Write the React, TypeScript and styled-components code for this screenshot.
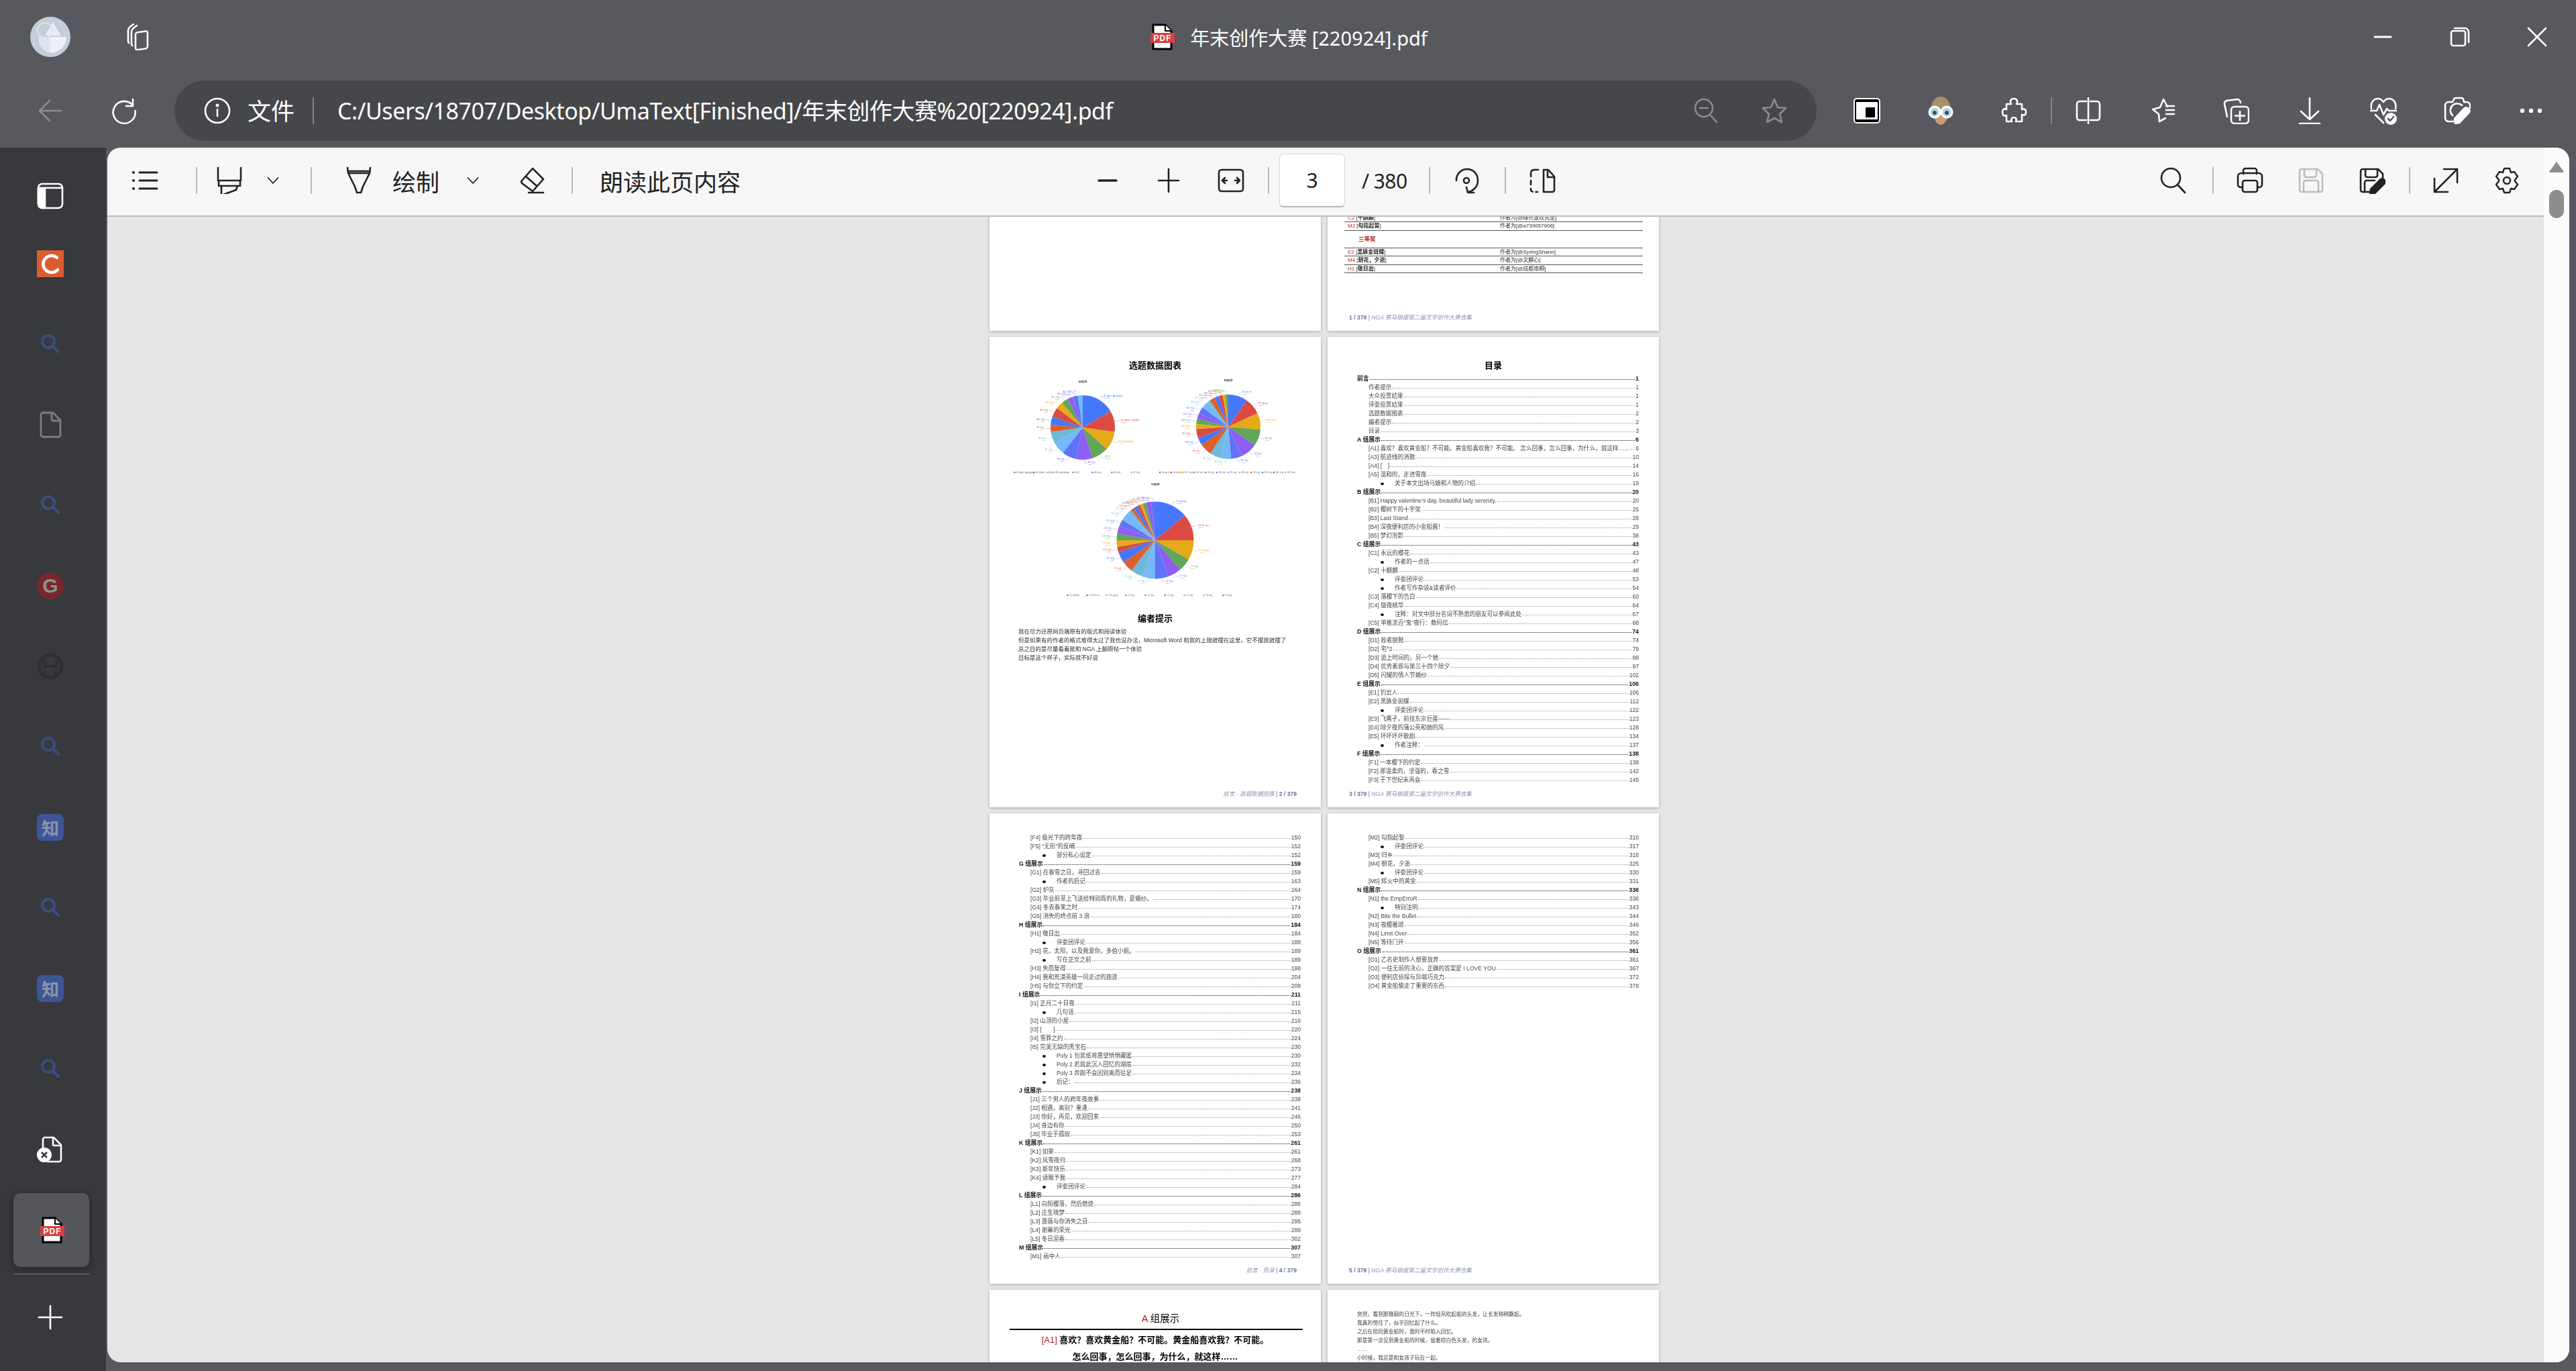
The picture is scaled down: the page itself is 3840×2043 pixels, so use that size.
import React from 'react';
import styled, { createGlobalStyle } from 'styled-components';

const UI_FONT = '"Noto Sans", "Noto Sans CJK SC", sans-serif';
const DOC_FONT = '"Liberation Sans", "Noto Sans CJK SC", sans-serif';

const Global = createGlobalStyle`
  html, body { margin: 0; padding: 0; background: #58595e; overflow: hidden; }
  #root { width: 3840px; height: 2043px; }
`;

const Shell = styled.div`
  width: 3840px;
  height: 2043px;
  display: flex;
  flex-direction: column;
  background: #58595e;
  font-family: ${UI_FONT};
  color: #fff;
  overflow: hidden;
`;

/* ---- browser chrome ---- */
const TitleBar = styled.div`
  height: 120px;
  flex: none;
  display: grid;
  grid-template-columns: 1fr auto 1fr;
  align-items: center;
  padding-bottom: 10px;
  box-sizing: border-box;
`;
const TitleLeft = styled.div`
  display: flex;
  align-items: center;
  padding-left: 45px;
  gap: 80px;
`;
const TitleCenter = styled.div`
  display: flex;
  align-items: center;
  gap: 22px;
  font-size: 29px;
`;
const WindowButtons = styled.div`
  display: flex;
  justify-content: flex-end;
  align-items: center;
  padding-right: 38px;
  gap: 75px;
`;
const AddressRow = styled.div`
  height: 100px;
  flex: none;
  display: flex;
  align-items: flex-start;
`;
const RowButton = styled.div<{ $w?: number }>`
  width: ${(p) => p.$w ?? 110}px;
  height: 90px;
  flex: none;
  display: flex;
  align-items: center;
  justify-content: center;
`;
const NavGroup = styled.div`
  display: flex;
  padding-left: 20px;
  width: 260px;
  box-sizing: border-box;
`;
const UrlPill = styled.div`
  width: 2448px;
  height: 90px;
  flex: none;
  border-radius: 45px;
  background: #46474b;
  display: flex;
  align-items: center;
  box-sizing: border-box;
  padding-left: 44px;
`;
const UrlLabel = styled.span`
  font-size: 35px;
  margin-left: 25px;
  line-height: 1;
`;
const UrlDivider = styled.i`
  width: 2px;
  height: 40px;
  background: #85868a;
  margin: 0 35px 0 27px;
`;
const UrlText = styled.span`
  font-size: 34px;
  line-height: 1;
  white-space: nowrap;
  width: 1155px;
  flex: none;
  letter-spacing: -0.45px;
`;
const PillEnd = styled.div`
  margin-left: auto;
  display: flex;
  align-items: center;
  gap: 62px;
  padding-right: 43px;
`;
const ChromeTools = styled.div`
  display: flex;
  margin-left: 20px;
`;
const ChromeDivider = styled.i`
  width: 2px;
  height: 40px;
  margin: 25px -1px 0;
  background: #85868a;
`;

/* ---- sidebar ---- */
const Body = styled.div`
  flex: 1;
  display: flex;
  min-height: 0;
`;
const Sidebar = styled.div`
  width: 160px;
  flex: none;
  background: #38393d;
  border-right: 2px solid #58595e;
  display: flex;
  flex-direction: column;
  padding: 52px 8px 0 0;
  box-sizing: border-box;
`;
const SideTop = styled.div`
  height: 40px;
  margin-bottom: 21px;
  display: flex;
  justify-content: center;
`;
const SideItem = styled.div`
  height: 120px;
  flex: none;
  display: flex;
  align-items: center;
  justify-content: center;
`;
const SideActive = styled.div`
  width: 113px;
  height: 110px;
  margin-left: 3px;
  border-radius: 10px;
  background: #55565b;
  box-shadow: 0 2px 12px rgba(0, 0, 0, 0.35);
  display: flex;
  align-items: center;
  justify-content: center;
`;
const SideRule = styled.div`
  width: 113px;
  margin: 5px 0 4px 20px;
  border-top: 1px solid #7c7d80;
`;
const SideTile = styled.div<{ $bg: string; $round?: string }>`
  width: 40px;
  height: 40px;
  background: ${(p) => p.$bg};
  border-radius: ${(p) => p.$round ?? '0'};
  display: flex;
  align-items: center;
  justify-content: center;
  overflow: hidden;
`;
const ZhihuMark = styled.span`
  font-family: "Noto Sans CJK SC", sans-serif;
  font-size: 26px;
  line-height: 1;
  font-weight: 700;
  color: #8d94a8;
`;
const GMark = styled.span`
  font-family: "Liberation Sans", sans-serif;
  font-size: 30px;
  line-height: 1;
  font-weight: 700;
  color: #8f8f92;
`;

/* ---- pdf panel ---- */
const Panel = styled.div`
  width: 3670px;
  height: 1810px;
  flex: none;
  display: flex;
  border-radius: 20px;
  overflow: hidden;
  background: #e6e6e6;
`;
const PanelMain = styled.div`
  flex: 1;
  min-width: 0;
  display: flex;
  flex-direction: column;
`;
const Toolbar = styled.div`
  height: 103px;
  flex: none;
  box-sizing: border-box;
  border-bottom: 2px solid #bdbdbd;
  background: #f7f7f7;
  color: #222;
  display: flex;
  align-items: center;
  padding: 0 0 3px 36px;
`;
const ToolIcon = styled.div<{ $ml?: number; $w?: number }>`
  width: ${(p) => p.$w ?? 40}px;
  height: 44px;
  flex: none;
  margin-left: ${(p) => p.$ml ?? 0}px;
  display: flex;
  align-items: center;
  justify-content: center;
`;
const ToolDivider = styled.i<{ $ml: number }>`
  width: 2px;
  height: 40px;
  flex: none;
  background: #b9b9b9;
  margin-left: ${(p) => p.$ml}px;
`;
const ToolText = styled.span<{ $ml: number }>`
  font-family: "Noto Sans CJK SC", sans-serif;
  font-size: 35px;
  line-height: 1;
  flex: none;
  white-space: nowrap;
  margin-left: ${(p) => p.$ml}px;
`;
const PageBox = styled.div`
  width: 98px;
  height: 80px;
  margin-left: 15px;
  flex: none;
  box-sizing: border-box;
  background: #fff;
  border: 1px solid #d6d6d6;
  border-bottom: 2px solid #b5b5b5;
  border-radius: 6px;
  display: flex;
  align-items: center;
  justify-content: center;
  font-size: 30px;
`;
const PageCount = styled.span`
  margin-left: 25px;
  width: 70px;
  flex: none;
  font-size: 30px;
  white-space: nowrap;
  letter-spacing: -0.6px;
`;
const ScrollRail = styled.div`
  width: 38px;
  flex: none;
  background: #fcfcfc;
  display: flex;
  flex-direction: column;
  align-items: center;
  padding-top: 20px;
`;
const ScrollArrow = styled.svg`
  width: 24px;
  height: 18px;
  display: block;
`;
const ScrollThumb = styled.div`
  width: 22px;
  height: 42px;
  margin-top: 25px;
  border-radius: 11px;
  background: #8d8d8d;
`;
const Viewer = styled.div`
  flex: 1;
  min-height: 0;
  overflow: hidden;
  padding-right: 4px;
`;
const Pages = styled.div`
  display: grid;
  grid-template-columns: 494px 494px;
  justify-content: center;
  gap: 9px 10px;
  margin-top: -531px;
`;
const Page = styled.div<{ $end?: boolean }>`
  height: 701px;
  background: #fff;
  box-shadow: 0 1px 4px rgba(0, 0, 0, 0.28);
  display: flex;
  flex-direction: column;
  justify-content: ${(p) => (p.$end ? 'flex-end' : 'flex-start')};
  font-family: ${DOC_FONT};
  color: #2c2c2c;
  overflow: hidden;
  filter: blur(0.3px);
`;
const PageFill = styled.div`
  flex: 1;
`;
const Footer = styled.div<{ $right?: boolean }>`
  height: 12px;
  line-height: 12px;
  flex: none;
  margin-bottom: 14px;
  padding: ${(p) => (p.$right ? '0 36px 0 0' : '0 0 0 32px')};
  text-align: ${(p) => (p.$right ? 'right' : 'left')};
  font-size: 8.6px;
  color: #5f6fa0;
  white-space: nowrap;
`;
const FooterItalic = styled.em`
  color: #8a94b4;
`;
const FooterNum = styled.b`
  font-weight: 700;
`;
const AwardTable = styled.div`
  margin: 0 24px 60px 25px;
`;
const AwardRow = styled.div`
  height: 12.5px;
  line-height: 12px;
  box-sizing: border-box;
  border-bottom: 1px solid #555;
  display: grid;
  grid-template-columns: 227px 1fr;
  font-size: 8px;
  padding-left: 5px;
  white-space: nowrap;
`;
const AwardHead = styled.div`
  height: 25px;
  line-height: 24px;
  font-size: 8.5px;
  font-weight: 700;
  color: #b01818;
  padding-left: 21px;
  border-bottom: 1px solid #555;
`;
const AwardCode = styled.span`
  color: #c02020;
`;
const AwardName = styled.b`
  font-weight: 700;
  color: #222;
`;
const DocTitle = styled.h2`
  margin: 35px 0 0;
  text-align: center;
  font-size: 13px;
  line-height: 16px;
  font-weight: 700;
  color: #000;
  flex: none;
`;
const ChartRow = styled.div`
  display: flex;
  justify-content: center;
  gap: 7px;
  margin-top: 7px;
`;
const ChartWrap = styled.div`
  display: flex;
  justify-content: center;
  margin-top: 5px;
`;
const ChartSvg = styled.svg`
  display: block;
  flex: none;
`;
const NoteTitle = styled(DocTitle)`
  margin-top: 19px;
`;
const Note = styled.div`
  margin: 5px 0 0 43px;
  font-size: 8.5px;
  line-height: 13px;
  white-space: nowrap;
`;
const TocList = styled.div<{ $mt: number }>`
  margin: ${(p) => p.$mt}px 30px 0 44px;
`;
const TocRow = styled.div<{ $level: number }>`
  height: 13px;
  line-height: 13px;
  display: flex;
  align-items: baseline;
  white-space: nowrap;
  font-size: ${(p) => (p.$level === 0 ? 8.8 : 8.6)}px;
  font-weight: ${(p) => (p.$level === 0 ? 700 : 400)};
  color: ${(p) => (p.$level === 0 ? '#111' : '#454545')};
  padding-left: ${(p) => (p.$level === 1 ? 17 : 0)}px;
`;
const TocBullet = styled.i`
  width: 5px;
  height: 4px;
  flex: none;
  border-radius: 50%;
  background: #111;
  margin: 0 16.5px 1px 34.5px;
`;
const TocLeader = styled.span<{ $level: number }>`
  flex: 1;
  min-width: 0;
  margin: 0 1px;
  border-bottom: 1px dotted ${(p) => (p.$level === 0 ? '#222' : '#999')};
  transform: translateY(-1px);
`;
const GroupTitle = styled.div`
  margin-top: 34px;
  text-align: center;
  font-size: 14.5px;
  line-height: 18px;
  color: #000;
  padding-left: 16px;
`;
const GroupLetter = styled.span`
  color: #b01818;
`;
const GroupRule = styled.div`
  margin: 6px 27px 0 30px;
  border-top: 2px solid #000;
`;
const StoryTitle = styled.div<{ $mt: number }>`
  margin-top: ${(p) => p.$mt}px;
  text-align: center;
  font-size: 13px;
  line-height: 16px;
  font-weight: 700;
  color: #000;
  white-space: nowrap;
`;
const StoryCode = styled.span`
  color: #b01818;
  font-weight: 400;
`;
const Prose = styled.div`
  padding: 30px 0 0 44px;
  font-size: 7.8px;
  line-height: 13px;
  color: #3c3c3c;
  white-space: nowrap;
`;

/* ---- icons ---- */
const Ic = ({
  c = 'currentColor',
  s = 40,
  w = 2.6,
  children,
}: {
  c?: string;
  s?: number;
  w?: number;
  children: React.ReactNode;
}) => (
  <svg width={s} height={s} viewBox="0 0 40 40" fill="none" stroke={c} strokeWidth={w} strokeLinecap="round" strokeLinejoin="round">
    {children}
  </svg>
);

const SearchBlue = () => (
  <Ic c="#35507f" w={4}>
    <circle cx="17" cy="16" r="9" />
    <path d="M24 23l8 8" />
  </Ic>
);

const PdfFile = ({ s = 40 }: { s?: number }) => (
  <svg width={s} height={s} viewBox="0 0 40 40">
    <path d="M7 2h18l9 9v27H7z" fill="#fff" stroke="#000" strokeWidth="3" />
    <path d="M25 2v9h9" fill="#fff" stroke="#000" strokeWidth="2" />
    <rect x="3" y="14" width="36" height="15" fill="#d94040" />
    <text x="21" y="26" textAnchor="middle" fontFamily="Liberation Sans, sans-serif" fontSize="12" fontWeight="700" fill="#fff" letterSpacing="1">
      PDF
    </text>
  </svg>
);

/* ---- pie charts ---- */
const PALETTE = ['#4477fc', '#db4b43', '#e6a917', '#61a659', '#8c5ff0', '#5f72f8', '#76b8fa', '#6fbadc', '#dc602f'];

type Slice = [number, string];

const pt = (cx: number, cy: number, r: number, deg: number): [number, number] => {
  const a = ((deg - 90) * Math.PI) / 180;
  return [cx + r * Math.cos(a), cy + r * Math.sin(a)];
};

const Pie = ({
  title,
  width,
  height,
  cy,
  r,
  titleY,
  legendY,
  legendCount,
  slices,
}: {
  title: string;
  width: number;
  height: number;
  cy: number;
  r: number;
  titleY: number;
  legendY: number;
  legendCount: number;
  slices: Slice[];
}) => {
  const cx = width / 2;
  let prev = 0;
  const legendStep = Math.min(29, (width - 6) / legendCount);
  const legendX = cx - (legendStep * legendCount) / 2;
  return (
    <ChartSvg width={width} height={height} viewBox={`0 0 ${width} ${height}`} fontFamily={DOC_FONT}>
      <text x={cx} y={titleY} textAnchor="middle" fontSize="3.4" fontWeight="700" fill="#333">
        {title}
      </text>
      {slices.map(([end, label], i) => {
        const start = prev;
        prev = end;
        const color = PALETTE[i % PALETTE.length];
        const [x1, y1] = pt(cx, cy, r, start);
        const [x2, y2] = pt(cx, cy, r, end);
        const large = end - start > 180 ? 1 : 0;
        const mid = (start + end) / 2;
        const [lx0, ly0] = pt(cx, cy, r, mid);
        const [lx1, ly1] = pt(cx, cy, r + 5, mid);
        const right = mid < 180;
        const lx2 = lx1 + (right ? 4 : -4);
        return (
          <g key={i}>
            <path d={`M${cx} ${cy}L${x1} ${y1}A${r} ${r} 0 ${large} 1 ${x2} ${y2}Z`} fill={color} />
            <path d={`M${lx0} ${ly0}L${lx1} ${ly1}L${lx2} ${ly1}`} stroke={color} strokeWidth="0.3" fill="none" />
            <text x={lx2 + (right ? 1 : -1)} y={ly1} textAnchor={right ? 'start' : 'end'} fontSize="2.8" fill={color}>
              {label}
            </text>
            <text x={lx2 + (right ? 1 : -1)} y={ly1 + 3} textAnchor={right ? 'start' : 'end'} fontSize="2.4" fill={color}>
              {(((end - start) / 360) * 100).toFixed(2)}%
            </text>
          </g>
        );
      })}
      {slices.slice(0, legendCount).map(([, label], i) => (
        <g key={i}>
          <circle cx={legendX + i * legendStep} cy={legendY} r="1.3" fill={PALETTE[i % PALETTE.length]} />
          <text x={legendX + i * legendStep + 3} y={legendY + 1} fontSize="2.6" fill="#666">
            {label}
          </text>
        </g>
      ))}
    </ChartSvg>
  );
};

const named = (ends: number[], labels: string[], prefix: string): Slice[] =>
  ends.map((end, i) => [end, labels[i] ?? `${prefix}${i + 1}: 作品`]);

const PIE_A = named(
  [60, 98, 132, 162, 192, 218, 241, 262, 275, 290, 307, 320, 332, 342, 351, 360],
  ['A1: 喜欢？喜欢黄金船', 'A5: 温和的，走进雪夜', 'A3: 航迹线的消散', 'A4: [ ]'],
  'A'
);
const PIE_B = named(
  [35, 65, 95, 125, 155, 175, 194, 214, 236, 250, 266, 275, 285, 295, 307, 320, 325, 335, 343, 350, 355, 360],
  ['B1: 情人节', 'B4: 便利店', 'B2: 十字架'],
  'B'
);
const PIE_C = named(
  [50, 90, 120, 140, 160, 180, 199, 218, 235, 252, 260, 270, 280, 292, 302, 315, 321, 326, 332, 337, 341, 346, 354, 360],
  ['C5: 百鬼夜行', 'C19: 那个女人', 'C15: 黄金船'],
  'C'
);

/* ---- table of contents data: level | text | page ---- */
const toc = (src: string) =>
  src
    .trim()
    .split('\n')
    .map((line) => {
      const [lv, text, page] = line.trim().split('|');
      return { level: Number(lv), text, page };
    });

const TOC_3 = toc(`
0|前言|1
1|作者提示|1
1|大众投票结果|1
1|评委投票结果|1
1|选题数据图表|2
1|编者提示|2
1|目录|3
0|A 组展示|6
1|[A1] 喜欢？喜欢黄金船？不可能。黄金船喜欢我？不可能。 怎么回事，怎么回事，为什么，就这样……|6
1|[A3] 航迹线的消散|10
1|[A4] [　]|14
1|[A5] 温和的，走进雪夜|16
2|关于本文出场马娘和人物的介绍|19
0|B 组展示|20
1|[B1] Happy valentine's day, beautiful lady serenity.|20
1|[B2] 樱树下的十字架|25
1|[B3] Last Stand|28
1|[B4] 深夜便利店的小金船酱！|29
1|[B5] 梦幻泡影|38
0|C 组展示|43
1|[C1] 永远的樱花|43
2|作者的一点话|47
1|[C2] 十麒麟|48
2|评委团评论|53
2|作者写作杂谈&读者评价|54
1|[C3] 落樱下的告白|60
1|[C4] 胧夜桃华|64
2|注释：对文中部分名词不熟悉的朋友可以参阅此处|67
1|[C5] 单推流百"鬼"夜行：数码伝|68
0|D 组展示|74
1|[D1] 败者脱靴|74
1|[D2] 宅^2|79
1|[D3] 追上时间的，另一个她|88
1|[D4] 优秀素质与第三十四个除夕|97
1|[D5] 闪耀的情人节婚纱|102
0|E 组展示|106
1|[E1] 钓云人|106
1|[E2] 黑脉金斑蝶|112
2|评委团评论|122
1|[E3] 飞鹰子，前往东京巨蛋——|123
1|[E4] 除夕夜的蒲公英和她的风|128
1|[E5] 坏坏坏坏歌剧|134
2|作者注释：|137
0|F 组展示|138
1|[F1] 一本樱下的约定|138
1|[F2] 那温柔的，坚强的，春之雪|142
1|[F3] 于下世纪末再会|145
`);

const TOC_4 = toc(`
1|[F4] 极光下的跨年夜|150
1|[F5] "无形"的反晡|152
2|部分私心设定|152
0|G 组展示|159
1|[G1] 在春雪之日，寻回过去|159
2|作者的后记|163
1|[G2] 炉灰|164
1|[G3] 毕业前草上飞送给特别周的礼物，是婚纱。|170
1|[G4] 冬去春来之时|174
1|[G5] 消失的终点前 3 浪|180
0|H 组展示|184
1|[H1] 敬日出|184
2|评委团评论|188
1|[H2] 花，太阳，以及我爱你，多伯小姐。|189
2|写在正文之前|189
1|[H3] 失而复得|198
1|[H4] 我和荒漠英雄一同走过的旅途|204
1|[H5] 与你立下的约定|208
0|I 组展示|211
1|[I1] 正月二十日夜|211
2|几句话|215
1|[I2] 山顶的小屋|216
1|[I3] [　　]|220
1|[I4] 雪葬之约|224
1|[I5] 完美无缺的黑宝石|230
2|Poly 1 包装纸将愿望悄悄藏匿|230
2|Poly 2 若就此沉入回忆的湖底|232
2|Poly 3 奔跑不会因别离而驻足|234
2|后记：|236
0|J 组展示|238
1|[J1] 三个男人的跨年夜故事|238
1|[J2] 相遇，离别？重逢|241
1|[J3] 你好，再见，欢迎回来|246
1|[J4] 身边有你|250
1|[J5] 毕业于孤寂|253
0|K 组展示|261
1|[K1] 如果|261
1|[K2] 风雪夜归|268
1|[K3] 新年快乐|273
1|[K4] 请赐予我|277
2|评委团评论|284
0|L 组展示|286
1|[L1] 向阳樱落，然后燃烧|286
1|[L2] 庄生晓梦|288
1|[L3] 蔷薇与你消失之日|295
1|[L4] 谢幕的荣光|299
1|[L5] 冬日迎春|302
0|M 组展示|307
1|[M1] 画中人|307
`);

const TOC_5 = toc(`
1|[M2] 勾指起誓|310
2|评委团评论|317
1|[M3] 归乡|318
1|[M4] 朝花，夕逝|325
2|评委团评论|330
1|[M5] 辉火中的黄金|331
0|N 组展示|336
1|[N1] the EmpErroR|336
2|特别注明|343
1|[N2] Bite the Bullet|344
1|[N3] 夜樱雅颂|346
1|[N4] Limit Over|352
1|[N5] 等待门开|356
0|O 组展示|361
1|[O1] 乙名史制作人想要放弃|361
1|[O2] 一往无前的决心，正确的答案是 I LOVE YOU|367
1|[O3] 便利店侦探与异端巧克力|372
1|[O4] 黄金船偷走了重要的东西|378
`);

const Toc = ({ rows, mt }: { rows: ReturnType<typeof toc>; mt: number }) => (
  <TocList $mt={mt}>
    {rows.map((r, i) => (
      <TocRow key={i} $level={r.level}>
        {r.level === 2 && <TocBullet />}
        <span>{r.text}</span>
        <TocLeader $level={r.level} />
        <span>{r.page}</span>
      </TocRow>
    ))}
  </TocList>
);

const BookFooter = ({ n }: { n: number }) => (
  <Footer>
    <FooterNum>{n} / 379</FooterNum> | <FooterItalic>NGA 赛马娘版第二届文学创作大赛合集</FooterItalic>
  </Footer>
);

const ChapterFooter = ({ label, n }: { label: string; n: number }) => (
  <Footer $right>
    <FooterItalic>{label}</FooterItalic> | <FooterNum>{n} / 379</FooterNum>
  </Footer>
);

const Award = ({ code, name, author }: { code: string; name: string; author: string }) => (
  <AwardRow>
    <span>
      <AwardCode>{code}</AwardCode> [<AwardName>{name}</AwardName>]
    </span>
    <span>作者为[{author}]</span>
  </AwardRow>
);

export default function App() {
  return (
    <Shell>
      <Global />
      <TitleBar>
        <TitleLeft>
          <svg width="60" height="60" viewBox="0 0 60 60">
            <circle cx="30" cy="30" r="30" fill="#c3ced9" />
            <path d="M30 30h24a24 24 0 0 1-24 24z" fill="#eef0f6" />
            <path d="M12 30h18v24a24 24 0 0 1-18-24z" fill="#dfe3f0" />
            <path d="M22 28l12-20 12 20z" fill="#e8ecf3" />
            <circle cx="22" cy="20" r="11" fill="none" stroke="#e3e7ee" strokeWidth="1.5" />
          </svg>
          <Ic c="#fff">
            <rect x="17" y="11" width="18" height="26" rx="3" transform="skewY(-8) translate(0 5)" />
            <path d="M12 33l-1-2V12c0-3 2-4 4-6l4-3" />
            <path d="M7 29l-1-2V10c0-3 2-4 4-6l4-3" />
          </Ic>
        </TitleLeft>
        <TitleCenter>
          <PdfFile />
          <span>年末创作大赛 [220924].pdf</span>
        </TitleCenter>
        <WindowButtons>
          <Ic c="#fff" w={3}>
            <path d="M8 20h24" />
          </Ic>
          <Ic c="#fff" w={2.6}>
            <rect x="7" y="11" width="21" height="22" rx="3" />
            <path d="M12 7h15a6 6 0 0 1 6 6v15" />
          </Ic>
          <Ic c="#fff" w={2.6}>
            <path d="M7 7l26 26M33 7L7 33" />
          </Ic>
        </WindowButtons>
      </TitleBar>

      <AddressRow>
        <NavGroup>
          <RowButton>
            <Ic c="#8b8c90">
              <path d="M36 20H5M19 5L4 20l15 15" />
            </Ic>
          </RowButton>
          <RowButton>
            <Ic c="#fff">
              <path d="M33 12A16.5 16.5 0 1 0 36.500 20" />
              <path d="M33 3v10H23" />
            </Ic>
          </RowButton>
        </NavGroup>
        <UrlPill>
          <Ic c="#fff">
            <circle cx="20" cy="20" r="18" />
            <path d="M20 18v10" />
            <circle cx="20" cy="12" r="1.2" fill="#fff" />
          </Ic>
          <UrlLabel>文件</UrlLabel>
          <UrlDivider />
          <UrlText>C:/Users/18707/Desktop/UmaText[Finished]/年末创作大赛%20[220924].pdf</UrlText>
          <PillEnd>
            <Ic c="#8b8c90">
              <circle cx="17" cy="16" r="13" />
              <path d="M11 16h12M26 26l10 11" />
            </Ic>
            <Ic c="#8b8c90">
              <path d="M20 3l5 12 12 1-9 9 3 12-11-6-11 6 3-12-9-9 12-1z" />
            </Ic>
          </PillEnd>
        </UrlPill>
        <ChromeTools>
          <RowButton>
            <svg width="40" height="40" viewBox="0 0 40 40">
              <rect x="1" y="2" width="38" height="36" rx="4" fill="#000" stroke="#fff" strokeWidth="2" />
              <rect x="4" y="7" width="32" height="26" fill="#fff" />
              <rect x="18" y="15" width="14" height="15" fill="#000" />
            </svg>
          </RowButton>
          <RowButton>
            <svg width="40" height="44" viewBox="0 0 40 44">
              <path d="M5 22C5 8 12 1 20 1s15 7 15 21l-2 10H7z" fill="#a5916a" />
              <path d="M9 24c0 10 5 19 11 19s11-9 11-19z" fill="#cf9a70" />
              <circle cx="11" cy="24" r="8" fill="#b7d5e6" stroke="#fff" strokeWidth="3" />
              <circle cx="29" cy="24" r="8" fill="#b7d5e6" stroke="#fff" strokeWidth="3" />
              <circle cx="11" cy="25" r="3" fill="#33505f" />
              <circle cx="29" cy="25" r="3" fill="#33505f" />
            </svg>
          </RowButton>
          <RowButton>
            <Ic c="#fff">
              <path d="M8 10h7c-3-6 1-8 4-8s7 2 4 8h8v8c6-2 6 2 6 4s0 6-6 4v10h-9c2-5-1-6-3-6s-5 1-3 6H8v-9c-5 2-6-2-6-5s1-6 6-4z" />
            </Ic>
          </RowButton>
          <ChromeDivider />
          <RowButton>
            <Ic c="#fff">
              <path d="M17 6H7a4 4 0 0 0-4 4v20a4 4 0 0 0 4 4h10M23 6h10a4 4 0 0 1 4 4v20a4 4 0 0 1-4 4H23M20 1v38" />
            </Ic>
          </RowButton>
          <RowButton>
            <Ic c="#fff">
              <path d="M16 36l-1-11-9-7 11-3 5-12 6 11M16 36l9-5" />
              <path d="M26 19h12M26 25h12M26 13h12" />
            </Ic>
          </RowButton>
          <RowButton>
            <Ic c="#fff">
              <path d="M7 29L3 10c-.5-3 1-4 3-5l16-2c3 0 4 1 5 5" />
              <rect x="13" y="14" width="26" height="25" rx="5" />
              <path d="M26 21v13M19 27.500h14" />
            </Ic>
          </RowButton>
          <RowButton>
            <Ic c="#fff">
              <path d="M20 1v32M7 21l13 12 13-12M5 39h30" />
            </Ic>
          </RowButton>
          <RowButton>
            <svg width="40" height="42" viewBox="0 0 40 42" fill="none" stroke="#fff" strokeWidth="2.600" strokeLinecap="round" strokeLinejoin="round">
              <path d="M2 18C0 8 6 3 12 3c4 0 6 2 8 5 2-3 4-5 8-5 6 0 12 5 10 15" />
              <path d="M1 21h9l4-9 6 15 5-9 3 3h11M8 27l12 12" />
              <circle cx="31" cy="33" r="9" fill="#fff" stroke="none" />
              <path d="M27 33l3 3 5-6" stroke="#58595e" />
            </svg>
          </RowButton>
          <RowButton>
            <svg width="40" height="42" viewBox="0 0 40 42" fill="none" stroke="#fff" strokeWidth="2.600" strokeLinecap="round" strokeLinejoin="round">
              <path d="M15 37H7a5 5 0 0 1-5-5V13a5 5 0 0 1 5-5h6l2-4a3 3 0 0 1 3-2h8a3 3 0 0 1 3 2l1 4h4a5 5 0 0 1 5 5v4" />
              <path d="M13 28a10 10 0 1 1 14-15" />
              <path d="M17 40l-1-7 15-16c3-2 9 2 7 6L23 39z" fill="#fff" />
            </svg>
          </RowButton>
          <RowButton>
            <svg width="40" height="10" viewBox="0 0 40 10" fill="#fff">
              <circle cx="7" cy="5" r="3.200" />
              <circle cx="20" cy="5" r="3.200" />
              <circle cx="33" cy="5" r="3.200" />
            </svg>
          </RowButton>
        </ChromeTools>
      </AddressRow>

      <Body>
        <Sidebar>
          <SideTop>
            <Ic c="#fff">
              <rect x="2" y="2" width="36" height="36" rx="6" />
              <path d="M2 8h36" />
              <path d="M2 10h10v28H8a6 6 0 0 1-6-6z" fill="#fff" />
            </Ic>
          </SideTop>
          <SideItem>
            <SideTile $bg="#dc5c30">
              <svg width="40" height="40" viewBox="0 0 40 40" fill="none" stroke="#fff" strokeWidth="4.500" strokeLinecap="round">
                <path d="M30 11a12.500 12.500 0 1 0 1 18" />
              </svg>
            </SideTile>
          </SideItem>
          <SideItem>
            <SearchBlue />
          </SideItem>
          <SideItem>
            <Ic c="#7d7e80" w={2.8}>
              <path d="M9 2h15l11 11v22a3 3 0 0 1-3 3H9a3 3 0 0 1-3-3V5a3 3 0 0 1 3-3z" />
              <path d="M22 3v9a2 2 0 0 0 2 2h10" />
            </Ic>
          </SideItem>
          <SideItem>
            <SearchBlue />
          </SideItem>
          <SideItem>
            <SideTile $bg="#76282b" $round="50%">
              <GMark>G</GMark>
            </SideTile>
          </SideItem>
          <SideItem>
            <Ic c="#2e2f32" w={4}>
              <circle cx="20" cy="20" r="17" />
              <path d="M12 34v-6M28 34v-6M11 12v8h18v-8" />
            </Ic>
          </SideItem>
          <SideItem>
            <SearchBlue />
          </SideItem>
          <SideItem>
            <SideTile $bg="#3c5498" $round="8px">
              <ZhihuMark>知</ZhihuMark>
            </SideTile>
          </SideItem>
          <SideItem>
            <SearchBlue />
          </SideItem>
          <SideItem>
            <SideTile $bg="#3c5498" $round="8px">
              <ZhihuMark>知</ZhihuMark>
            </SideTile>
          </SideItem>
          <SideItem>
            <SearchBlue />
          </SideItem>
          <SideItem>
            <svg width="40" height="40" viewBox="0 0 40 40" fill="none" stroke="#fff" strokeWidth="2.600" strokeLinejoin="round">
              <path d="M9 18V5a3 3 0 0 1 3-3h13l11 11v22a3 3 0 0 1-3 3H15" />
              <path d="M24 3v9a2 2 0 0 0 2 2h9" />
              <circle cx="11" cy="28" r="11" fill="#fff" stroke="none" />
              <path d="M7 24l8 8M15 24l-8 8" stroke="#38393d" />
            </svg>
          </SideItem>
          <SideItem>
            <SideActive>
              <PdfFile />
            </SideActive>
          </SideItem>
          <SideRule />
          <SideItem>
            <Ic c="#fff">
              <path d="M20 3v34M3 20h34" />
            </Ic>
          </SideItem>
        </Sidebar>

        <Panel>
          <PanelMain>
            <Toolbar>
              <ToolIcon>
                <svg width="40" height="40" viewBox="0 0 40 40" stroke="#222" strokeWidth="3" strokeLinecap="round" fill="#222">
                  <circle cx="3" cy="8" r="2" stroke="none" />
                  <circle cx="3" cy="20" r="2" stroke="none" />
                  <circle cx="3" cy="32" r="2" stroke="none" />
                  <path d="M12 8h26M12 20h26M12 32h26" />
                </svg>
              </ToolIcon>
              <ToolDivider $ml={56} />
              <ToolIcon $ml={28}>
                <Ic>
                  <path d="M3 0v20h34V0M4 20v8h32v-8" />
                  <path d="M8 28v14l22-8 2-6" />
                </Ic>
              </ToolIcon>
              <ToolIcon $ml={35} $w={20}>
                <Ic s={20} w={3.500}>
                  <path d="M5 12l15 16 15-16" />
                </Ic>
              </ToolIcon>
              <ToolDivider $ml={46} />
              <ToolIcon $ml={50}>
                <Ic>
                  <path d="M3 0l1 9h32l1-9M4 9l10 20M36 9L26 29M14 29l3 9h6l3-9" />
                  <path d="M4 6h32" />
                </Ic>
              </ToolIcon>
              <ToolText $ml={30}>绘制</ToolText>
              <ToolIcon $ml={40} $w={20}>
                <Ic s={20} w={3.500}>
                  <path d="M5 12l15 16 15-16" />
                </Ic>
              </ToolIcon>
              <ToolIcon $ml={59}>
                <Ic>
                  <path d="M20 2l16 16-16 18L4 24a3 3 0 0 1 0-4z" />
                  <path d="M10 14l16 14M14 38h22" />
                </Ic>
              </ToolIcon>
              <ToolDivider $ml={38} />
              <ToolText $ml={40}>朗读此页内容</ToolText>
              <ToolIcon $ml={528}>
                <Ic w={3.400}>
                  <path d="M6 20h26" />
                </Ic>
              </ToolIcon>
              <ToolIcon $ml={50}>
                <Ic>
                  <path d="M20 3v34M5 20h30" />
                </Ic>
              </ToolIcon>
              <ToolIcon $ml={53}>
                <Ic>
                  <rect x="2" y="4" width="36" height="32" rx="4" />
                  <path d="M14 20H7M11 16l-4 4 4 4M26 20h7M29 16l4 4-4 4" />
                </Ic>
              </ToolIcon>
              <ToolDivider $ml={35} />
              <PageBox>3</PageBox>
              <PageCount>/ 380</PageCount>
              <ToolDivider $ml={30} />
              <ToolIcon $ml={34}>
                <Ic>
                  <path d="M5 20A16 16 0 0 1 21 3c10 0 16 8 16 17s-6 15-14 17" />
                  <path d="M20 30l2 8 9 0" />
                  <circle cx="20" cy="20" r="4" />
                </Ic>
              </ToolIcon>
              <ToolDivider $ml={37} />
              <ToolIcon $ml={34}>
                <Ic>
                  <path d="M22 4h7l9 10v20a3 3 0 0 1-3 3H22zM28 4v11h10" />
                  <path d="M14 4H8M3 9v5M3 20v6M3 32v3l3 2h7M8 4a5 5 0 0 0-5 5" strokeDasharray="6 5" />
                </Ic>
              </ToolIcon>
              <ToolIcon $ml={901}>
                <Ic>
                  <circle cx="16" cy="16" r="14" />
                  <path d="M26 26l11 12" />
                </Ic>
              </ToolIcon>
              <ToolDivider $ml={38} />
              <ToolIcon $ml={34}>
                <Ic>
                  <path d="M10 10V5a3 3 0 0 1 3-3h14a3 3 0 0 1 3 3v5" />
                  <path d="M9 30H6a4 4 0 0 1-4-4V14a5 5 0 0 1 5-5h26a5 5 0 0 1 5 5v12a4 4 0 0 1-4 4h-3" />
                  <rect x="9" y="20" width="22" height="17" rx="3" />
                </Ic>
              </ToolIcon>
              <ToolIcon $ml={51}>
                <Ic c="#bdbdbd">
                  <path d="M6 3h24l7 7v24a3 3 0 0 1-3 3H6a3 3 0 0 1-3-3V6a3 3 0 0 1 3-3z" />
                  <path d="M10 4v8a3 3 0 0 0 3 3h12a3 3 0 0 0 3-3V4M9 37V23a3 3 0 0 1 3-3h16a3 3 0 0 1 3 3v14" />
                </Ic>
              </ToolIcon>
              <ToolIcon $ml={51}>
                <Ic>
                  <path d="M16 37H6a3 3 0 0 1-3-3V6a3 3 0 0 1 3-3h23l7 7v7" />
                  <path d="M10 4v8a3 3 0 0 0 3 3h12a3 3 0 0 0 3-3V4M9 37V23a3 3 0 0 1 3-3h12" />
                  <path d="M17 41l1-8 15-15c3-2 8 2 6 6L24 39z" fill="#222" />
                </Ic>
              </ToolIcon>
              <ToolDivider $ml={35} />
              <ToolIcon $ml={33}>
                <Ic>
                  <path d="M3 37L37 3M17 3h20v20M3 17v20h20" />
                </Ic>
              </ToolIcon>
              <ToolIcon $ml={51}>
                <Ic s={42} w={2.400}>
                  <path d="M16 2h8l2 6 5-1 5 7-4 5 0 2 4 5-5 7-5-1-2 6h-8l-2-6-5 1-5-7 4-5v-2l-4-5 5-7 5 1z" />
                  <circle cx="20" cy="20" r="5" />
                </Ic>
              </ToolIcon>
            </Toolbar>

            <Viewer>
              <Pages>
                <Page />
                <Page $end>
                  <AwardTable>
                    <Award code="C2" name="十麒麟" author="@绿色波叹先走" />
                    <Award code="M2" name="勾指起誓" author="@a739057906" />
                    <AwardHead>三等奖</AwardHead>
                    <Award code="E2" name="黑脉金斑蝶" author="@SpringShann" />
                    <Award code="M4" name="朝花，夕逝" author="@文麒心" />
                    <Award code="H1" name="敬日出" author="@成都南桐" />
                  </AwardTable>
                  <BookFooter n={1} />
                </Page>

                <Page>
                  <DocTitle>选题数据图表</DocTitle>
                  <ChartRow>
                    <Pie title="A组选题" width={210} height={150} cy={77} r={48} titleY={10} legendY={144} legendCount={7} slices={PIE_A} />
                    <Pie title="B组选题" width={210} height={150} cy={76} r={48} titleY={8} legendY={144} legendCount={12} slices={PIE_B} />
                  </ChartRow>
                  <ChartWrap>
                    <Pie title="C组选题" width={300} height={180} cy={90} r={57.5} titleY={8} legendY={172} legendCount={9} slices={PIE_C} />
                  </ChartWrap>
                  <NoteTitle>编者提示</NoteTitle>
                  <Note>
                    我在尽力还原网页端原有的版式和阅读体验
                    <br />
                    但是如果有的作者的格式堆得太过了我也没办法，Microsoft Word 和我的上限就摆在这里，它不摆我就摆了
                    <br />
                    总之目的是尽量看着能和 NGA 上翻原帖一个体验
                    <br />
                    目标是这个样子，实际我不好说
                  </Note>
                  <PageFill />
                  <ChapterFooter label="前言 - 选题数据图表" n={2} />
                </Page>

                <Page>
                  <DocTitle>目录</DocTitle>
                  <Toc rows={TOC_3} mt={4.5} />
                  <PageFill />
                  <BookFooter n={3} />
                </Page>

                <Page>
                  <Toc rows={TOC_4} mt={30} />
                  <PageFill />
                  <ChapterFooter label="前言 - 目录" n={4} />
                </Page>
                <Page>
                  <Toc rows={TOC_5} mt={30} />
                  <PageFill />
                  <BookFooter n={5} />
                </Page>

                <Page>
                  <GroupTitle>
                    <GroupLetter>A</GroupLetter> 组展示
                  </GroupTitle>
                  <GroupRule />
                  <StoryTitle $mt={7}>
                    <StoryCode>[A1]</StoryCode> 喜欢？喜欢黄金船？不可能。黄金船喜欢我？不可能。
                  </StoryTitle>
                  <StoryTitle $mt={9}>怎么回事，怎么回事，为什么，就这样……</StoryTitle>
                </Page>
                <Page>
                  <Prose>
                    突然，看到那微弱的日光下，一阵轻风吹起船的头发，让长发稍稍飘起。
                    <br />
                    我真的愣住了，似乎回忆起了什么。
                    <br />
                    之后在陪同黄金船时，我时不时陷入回忆。
                    <br />
                    那是第一次见到黄金船的时候，留着棕白色头发，的女孩。
                    <br />
                    ……
                    <br />
                    小时候，我总是和女孩子玩在一起。
                  </Prose>
                </Page>
              </Pages>
            </Viewer>
          </PanelMain>
          <ScrollRail>
            <ScrollArrow viewBox="0 0 24 18">
              <path d="M12 1L23 16a1 1 0 0 1-1 1H2a1 1 0 0 1-1-1z" fill="#8d8d8d" />
            </ScrollArrow>
            <ScrollThumb />
          </ScrollRail>
        </Panel>
      </Body>
    </Shell>
  );
}
